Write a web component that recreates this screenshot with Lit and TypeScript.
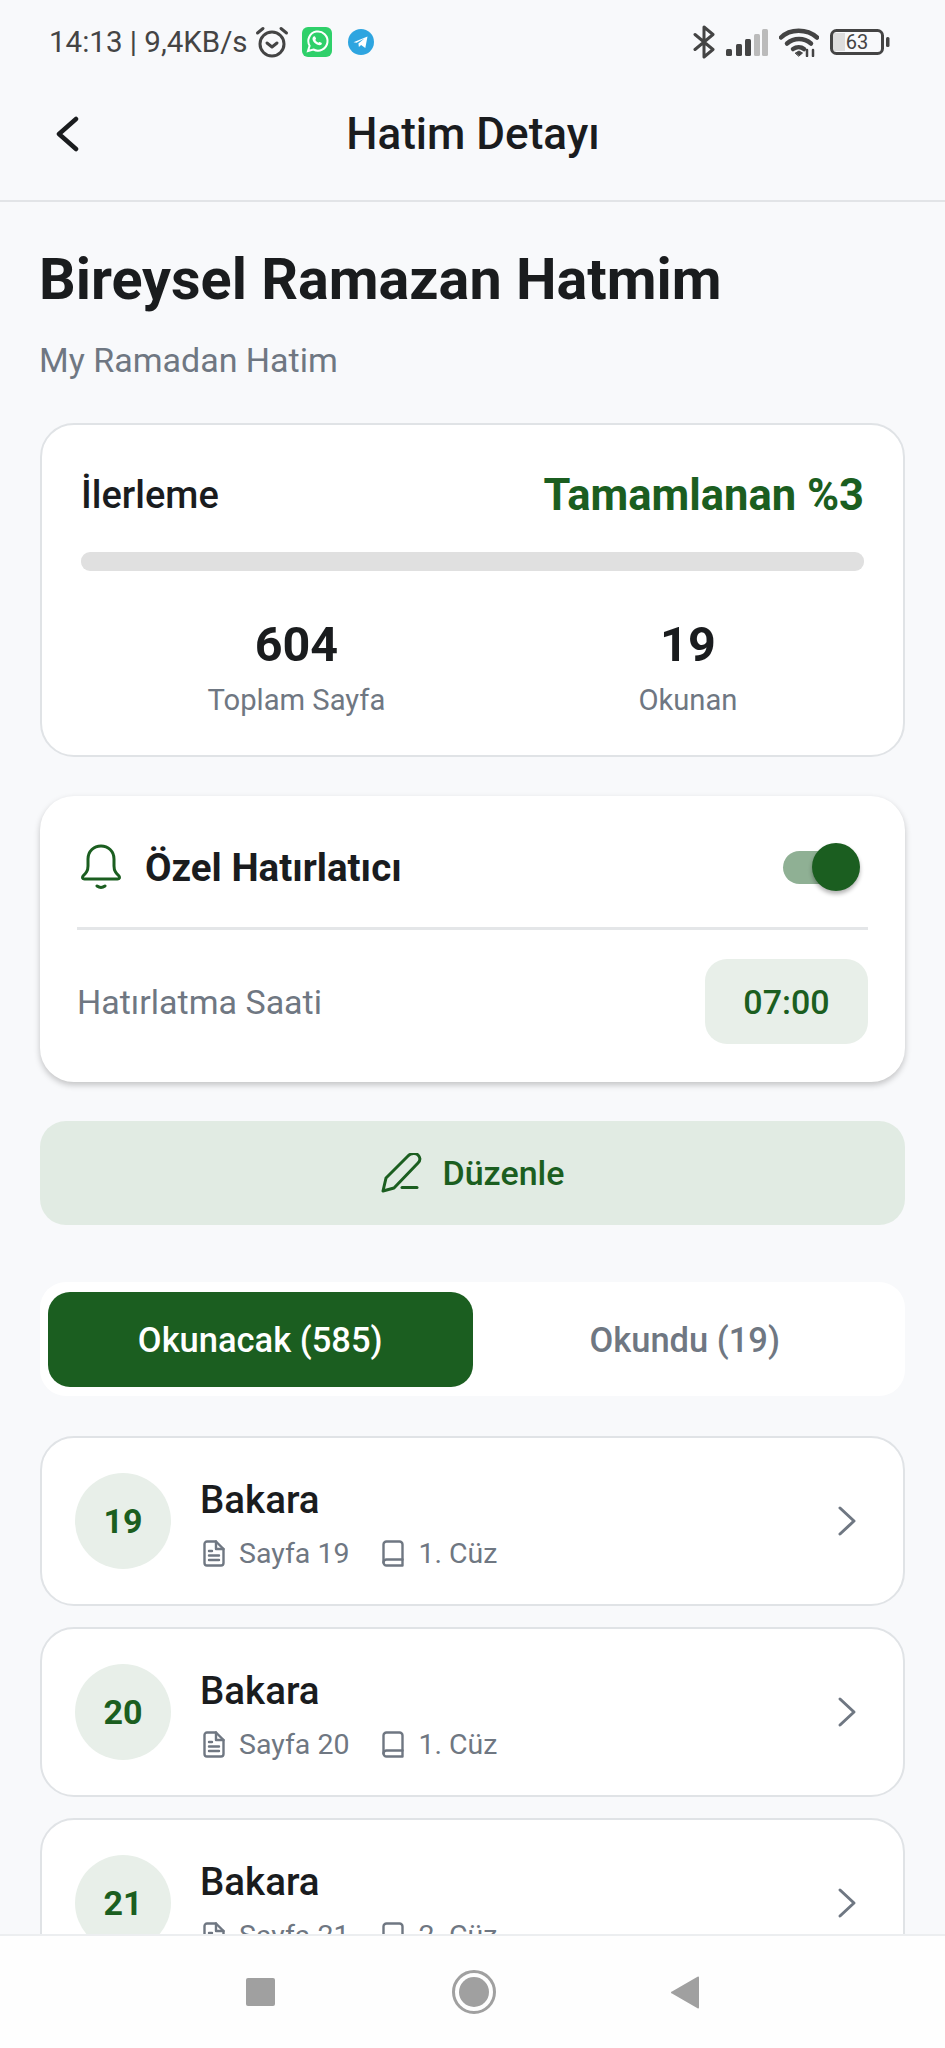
import { LitElement, html, css, svg } from "lit";
import { customElement } from "lit/decorators.js";

const rows = [
  { page: 19, juz: 1 },
  { page: 20, juz: 1 },
  { page: 21, juz: 2 },
];

const alarmIcon = svg`<svg width="34" height="34" viewBox="0 0 34 34" fill="none" stroke="#444" stroke-width="3" stroke-linecap="round" stroke-linejoin="round">
  <circle cx="17" cy="19" r="12"/>
  <path d="M12 18l5 4 5-4"/>
  <path d="M2.5 8L8 3.5M31.5 8L26 3.5"/>
</svg>`;

const whatsappIcon = svg`<svg width="30" height="30" viewBox="0 0 30 30">
  <rect width="30" height="30" rx="6" fill="#2fd06a"/>
  <path d="M6 24l1.6-5.2A9.6 9.6 0 1 1 11.4 22.5z" fill="none" stroke="#fff" stroke-width="2"/>
  <path d="M11.6 9.6c.6-.6 1.3-.5 1.6.1l.8 1.7c.1.4-.1.7-.7 1.4.6 1.3 1.5 2.2 3 2.9.7-.7 1-.9 1.4-.7l1.7.8c.6.3.6 1 .1 1.6-1 1.1-2.6 1-4.6 0-2.2-1.1-3.7-2.8-4.3-4.7-.3-1.2 0-2.2 1-3.1z" fill="#fff"/>
</svg>`;

const telegramIcon = svg`<svg width="26" height="26" viewBox="0 0 26 26">
  <circle cx="13" cy="13" r="13" fill="#2ea5e0"/>
  <path d="M5.5 13.2l14-5.7-2.2 11.5-4.2-3-2.2 2-.5-3.6 6-5-7.800 4.400z" fill="#fff"/>
</svg>`;

const bluetoothIcon = svg`<svg width="22" height="34" viewBox="0 0 22 34" fill="none" stroke="#444" stroke-width="3" stroke-linecap="round" stroke-linejoin="round">
  <path d="M2 9.5l18 15L11 32V2l9 7.5L2 24.5"/>
</svg>`;

const signalIcon = svg`<svg width="42" height="27" viewBox="0 0 42 27">
  <rect x="0" y="20" width="6" height="7" rx="1.5" fill="#444"/>
  <rect x="10" y="15" width="6" height="12" rx="1.5" fill="#444"/>
  <rect x="19" y="10" width="6" height="17" rx="1.5" fill="#444"/>
  <rect x="28" y="5" width="6" height="22" rx="1.5" fill="#bbb"/>
  <rect x="36" y="0" width="6" height="27" rx="1.5" fill="#bbb"/>
</svg>`;

const wifiIcon = svg`<svg width="40" height="30" viewBox="0 0 40 30" fill="none" stroke="#444" stroke-width="4.5" stroke-linecap="round">
  <path d="M2 10.5C11 1.5 28 1.5 38 10.5"/>
  <path d="M8 16.5c7-6 17-6 24 0"/>
  <path d="M14 22c3.500-2.500 8-2.500 11 0"/>
  <path d="M16.500 26l3.500-2 3.500 2-3.500 3z" fill="#444" stroke-width="1"/>
  <path d="M28 23v6M34 23v6" stroke-width="2.5"/>
</svg>`;

const batteryIcon = svg`<svg width="60" height="26" viewBox="0 0 60 26">
  <rect x="3" y="4" width="12" height="18" fill="#ddd"/>
  <rect x="1.5" y="1.5" width="51" height="23" rx="5" fill="none" stroke="#444" stroke-width="3"/>
  <rect x="56" y="8" width="3.5" height="10" rx="1.5" fill="#444"/>
</svg>`;

const backIcon = svg`<svg class="back" width="24" height="36" viewBox="0 0 24 36" fill="none" stroke="#1a1c1e" stroke-width="4.5" stroke-linecap="round" stroke-linejoin="round">
  <path d="M21 3L4 18l17 15"/>
</svg>`;

const bellIcon = svg`<svg class="bell" width="42" height="46" viewBox="0 0 42 46" fill="none" stroke="#1b5e20" stroke-width="3" stroke-linecap="round" stroke-linejoin="round">
  <path d="M3 32c3-3 5-5 5-10v-7C8 7 14 2 21 2s13 5 13 13v7c0 5 2 7 5 10 1 1.500 .5 3-1.500 3h-33C2.500 35 2 33.500 3 32z"/>
  <path d="M17 42c2.500 1.800 5.500 1.800 8 0"/>
</svg>`;

const penIcon = svg`<svg width="42" height="40" viewBox="0 0 42 40" fill="none" stroke="#1b5e20" stroke-width="3" stroke-linecap="round" stroke-linejoin="round">
  <path d="M2 38L5 25L27 3C30 0 35 0 37 2S40 7 37 10L13 35Z"/>
  <path d="M21 34.500h15"/>
</svg>`;

const docIcon = svg`<svg class="meta-icon" width="22" height="27" viewBox="0 0 22 27" fill="none" stroke="currentColor" stroke-width="2.4" stroke-linejoin="round" stroke-linecap="round">
  <path d="M4 1.5h9l7.500 7.500v14a2.500 2.500 0 0 1-2.500 2.500H4A2.500 2.500 0 0 1 1.500 23V4A2.500 2.500 0 0 1 4 1.500z"/>
  <path d="M13 1.500V9h7.500"/>
  <path d="M6 11h3M6 15.500h10M6 20h10"/>
</svg>`;

const bookIcon = svg`<svg class="meta-icon" width="22" height="27" viewBox="0 0 22 27" fill="none" stroke="currentColor" stroke-width="2.4" stroke-linejoin="round" stroke-linecap="round">
  <path d="M4.500 1.500h13a3 3 0 0 1 3 3v21H4.500a3 3 0 0 1-3-3v-18a3 3 0 0 1 3-3z"/>
  <path d="M1.500 22.500a3 3 0 0 1 3-3h16"/>
</svg>`;

const chevronIcon = svg`<svg width="20" height="32" viewBox="0 0 20 32" fill="none" stroke="#6f7782" stroke-width="3" stroke-linecap="round" stroke-linejoin="round">
  <path d="M3 3l14 13L3 29"/>
</svg>`;

@customElement("app-root")
export class AppRoot extends LitElement {
  static styles = css`
    :host {
      display: flex;
      flex-direction: column;
      height: 2048px;
      overflow: hidden;
      background: #f8f9fb;
      color: #1a1c1e;
      font-family: Roboto, "Noto Sans", sans-serif;
    }
    .status {
      flex: none;
      height: 68px;
      padding: 16px 55px 0 49px;
      box-sizing: border-box;
      display: flex;
      align-items: center;
      justify-content: space-between;
      color: #444;
    }
    .status-left {
      display: flex;
      align-items: center;
    }
    .status-text {
      font-size: 29.5px;
      margin-right: 7px;
    }
    .wa {
      display: flex;
      margin: 0 16px 0 13px;
    }
    .status-right {
      display: flex;
      align-items: center;
      gap: 11px;
    }
    .battery {
      position: relative;
      display: flex;
    }
    .battery-num {
      position: absolute;
      left: 0;
      top: 0;
      width: 54px;
      text-align: center;
      font-size: 20px;
      line-height: 26px;
    }
    .topbar {
      flex: none;
      height: 134px;
      box-sizing: border-box;
      border-bottom: 2px solid #e2e4e7;
      display: grid;
      grid-template-columns: 1fr auto 1fr;
      align-items: center;
      padding-left: 55px;
    }
    .topbar h1 {
      margin: 0;
      font-size: 44px;
      font-weight: 500;
      line-height: 48px;
      transform: translateX(-27px);
    }
    .back {
      display: block;
    }
    main {
      flex: 1;
      min-height: 0;
      overflow: hidden;
      padding: 50px 40px 0;
    }
    .title {
      margin: 0 0 0 -1px;
      font-size: 57.5px;
      font-weight: 700;
      line-height: 56px;
    }
    .subtitle {
      margin: 32px 0 43px -1px;
      font-size: 34px;
      line-height: 40px;
      color: #6f7782;
    }
    .card {
      background: #fff;
      border: 2px solid #e0e3e6;
      border-radius: 34px;
    }
    .progress {
      padding: 48px 39px 37px;
    }
    .progress-head {
      display: flex;
      justify-content: space-between;
      align-items: center;
      height: 44px;
    }
    .progress-head .label {
      font-size: 38px;
      font-weight: 500;
    }
    .progress-head .value {
      font-size: 43.5px;
      font-weight: 700;
      color: #1b5e20;
    }
    .bar {
      height: 19px;
      margin-top: 35px;
      border-radius: 9px;
      background: #e0e0e0;
    }
    .stats {
      display: flex;
      justify-content: space-around;
      margin-top: 49px;
      text-align: center;
    }
    .stat-num {
      font-size: 48.5px;
      font-weight: 700;
      line-height: 50px;
    }
    .stat-label {
      margin-top: 12px;
      font-size: 29.2px;
      line-height: 36px;
      color: #6f7782;
    }
    .reminder {
      margin-top: 39px;
      padding: 47px 37px 38px;
      background: #fff;
      border-radius: 34px;
      box-shadow: 0 3px 6px rgba(0, 0, 0, 0.22);
    }
    .reminder-head {
      display: flex;
      align-items: center;
      height: 48px;
    }
    .bell {
      flex: none;
      margin-left: 3px;
    }
    .reminder-head h2 {
      margin: 0 0 0 23px;
      flex: 1;
      font-size: 38.5px;
      font-weight: 700;
    }
    .toggle {
      position: relative;
      width: 72px;
      height: 33px;
      margin-right: 13px;
      border-radius: 17px;
      background: #8fb094;
    }
    .thumb {
      position: absolute;
      right: -5px;
      top: -8px;
      width: 48px;
      height: 48px;
      border-radius: 50%;
      background: #1b5e20;
      box-shadow: 0 3px 4px rgba(0, 0, 0, 0.3);
    }
    .divider {
      height: 3px;
      margin-top: 36px;
      background: #e4e6e8;
    }
    .time-row {
      display: flex;
      align-items: center;
      justify-content: space-between;
      margin-top: 29px;
    }
    .time-label {
      font-size: 34px;
      color: #6f7782;
    }
    .time {
      width: 163px;
      height: 85px;
      border-radius: 22px;
      background: #e8efe9;
      color: #1b5e20;
      display: flex;
      align-items: center;
      justify-content: center;
      font-size: 34px;
      font-weight: 500;
    }
    .edit {
      margin-top: 39px;
      height: 104px;
      border-radius: 26px;
      background: #e1ebe3;
      color: #1b5e20;
      display: flex;
      align-items: center;
      justify-content: center;
      gap: 20px;
      font-size: 34px;
      font-weight: 500;
    }
    .tabs {
      display: flex;
      margin-top: 57px;
      padding: 10px 8px 9px;
      height: 114px;
      box-sizing: border-box;
      background: #fff;
      border-radius: 26px;
    }
    .tab {
      flex: 1;
      display: flex;
      align-items: center;
      justify-content: center;
      border-radius: 22px;
      font-size: 34.5px;
      font-weight: 500;
      color: #6f7782;
    }
    .tab.active {
      background: #1b5e20;
      color: #fff;
    }
    .list {
      display: flex;
      flex-direction: column;
      gap: 21px;
      margin-top: 40px;
    }
    .row {
      flex: none;
      height: 170px;
      box-sizing: border-box;
      display: flex;
      align-items: center;
      gap: 29px;
      padding: 0 46px 0 33px;
    }
    .circle {
      flex: none;
      width: 96px;
      height: 96px;
      border-radius: 50%;
      background: #e8efe9;
      color: #1b5e20;
      display: flex;
      align-items: center;
      justify-content: center;
      font-size: 34px;
      font-weight: 700;
    }
    .info {
      flex: 1;
      padding-top: 7px;
    }
    .name {
      font-size: 38.5px;
      font-weight: 500;
      line-height: 44px;
    }
    .meta {
      display: flex;
      align-items: center;
      margin: 14px 0 0 3px;
      height: 36px;
      font-size: 28.5px;
      color: #6f7782;
    }
    .meta-icon {
      flex: none;
      margin-right: 14px;
    }
    .meta span {
      margin-right: 33px;
    }
    nav {
      flex: none;
      height: 114px;
      box-sizing: border-box;
      border-top: 2px solid #eceef0;
      background: #fefefe;
      display: flex;
      align-items: center;
      justify-content: center;
      gap: 175px;
    }
    .nav-square {
      width: 29px;
      height: 28px;
      margin-right: 2px;
      border-radius: 2px;
      background: #a0a0a0;
    }
  `;

  render() {
    return html`
      <div class="status">
        <div class="status-left">
          <span class="status-text">14:13 | 9,4KB/s</span>
          ${alarmIcon}
          <span class="wa">${whatsappIcon}</span>
          ${telegramIcon}
        </div>
        <div class="status-right">
          ${bluetoothIcon} ${signalIcon} ${wifiIcon}
          <span class="battery">${batteryIcon}<span class="battery-num">63</span></span>
        </div>
      </div>
      <header class="topbar">
        ${backIcon}
        <h1>Hatim Detayı</h1>
      </header>
      <main>
        <h2 class="title">Bireysel Ramazan Hatmim</h2>
        <p class="subtitle">My Ramadan Hatim</p>

        <section class="card progress">
          <div class="progress-head">
            <span class="label">İlerleme</span>
            <span class="value">Tamamlanan %3</span>
          </div>
          <div class="bar"></div>
          <div class="stats">
            <div>
              <div class="stat-num">604</div>
              <div class="stat-label">Toplam Sayfa</div>
            </div>
            <div>
              <div class="stat-num">19</div>
              <div class="stat-label">Okunan</div>
            </div>
          </div>
        </section>

        <section class="reminder">
          <div class="reminder-head">
            ${bellIcon}
            <h2>Özel Hatırlatıcı</h2>
            <div class="toggle"><div class="thumb"></div></div>
          </div>
          <div class="divider"></div>
          <div class="time-row">
            <span class="time-label">Hatırlatma Saati</span>
            <span class="time">07:00</span>
          </div>
        </section>

        <div class="edit">${penIcon}<span>Düzenle</span></div>

        <div class="tabs">
          <div class="tab active">Okunacak (585)</div>
          <div class="tab">Okundu (19)</div>
        </div>

        <div class="list">
          ${rows.map(
            (r) => html`
              <div class="card row">
                <div class="circle">${r.page}</div>
                <div class="info">
                  <div class="name">Bakara</div>
                  <div class="meta">
                    ${docIcon}<span>Sayfa ${r.page}</span>
                    ${bookIcon}<span>${r.juz}. Cüz</span>
                  </div>
                </div>
                ${chevronIcon}
              </div>
            `
          )}
        </div>
      </main>
      <nav>
        <div class="nav-square"></div>
        <svg width="44" height="44" viewBox="0 0 44 44">
          <circle cx="22" cy="22" r="20.5" fill="none" stroke="#a0a0a0" stroke-width="3"/>
          <circle cx="22" cy="22" r="15" fill="#a0a0a0"/>
        </svg>
        <svg width="29" height="33" viewBox="0 0 29 33">
          <path d="M28 1.5v30a1 1 0 0 1-1.5.8L1 17.5a1 1 0 0 1 0-2L26.5 .7A1 1 0 0 1 28 1.5z" fill="#a0a0a0"/>
        </svg>
      </nav>
    `;
  }
}
